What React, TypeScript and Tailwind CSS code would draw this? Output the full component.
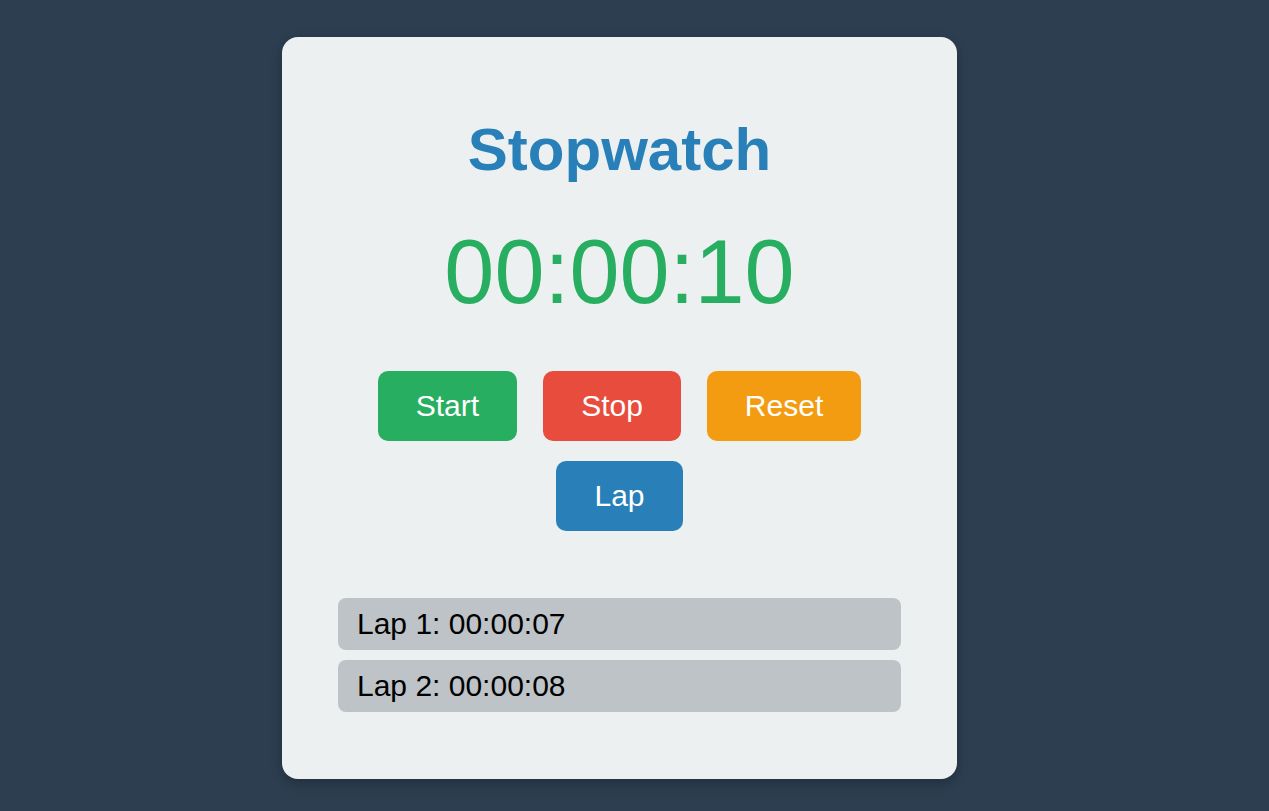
import { useEffect, useRef, useState } from 'react'

const font = { fontFamily: '"Liberation Sans", Arial, sans-serif' }

function fmt(sec: number) {
  const h = Math.floor(sec / 3600)
  const m = Math.floor((sec % 3600) / 60)
  const s = sec % 60
  return [h, m, s].map(n => String(n).padStart(2, '0')).join(':')
}

export default function App() {
  const [seconds, setSeconds] = useState(10)
  const [running, setRunning] = useState(false)
  const [laps, setLaps] = useState<number[]>([7, 8])
  const timer = useRef<number | null>(null)

  useEffect(() => {
    if (!running) return
    timer.current = window.setInterval(() => setSeconds(s => s + 1), 1000)
    return () => {
      if (timer.current) window.clearInterval(timer.current)
    }
  }, [running])

  const btn =
    'h-[70px] px-[38px] rounded-[10px] text-[30px] leading-[70px] text-white cursor-pointer'

  return (
    <div
      className="min-h-screen bg-[#2c3e50] flex justify-center items-start pt-[37px] pr-[30px]"
      style={font}
    >
      <div className="w-[675px] bg-[#ecf0f1] rounded-[16px] shadow-[0_4px_12px_rgba(0,0,0,0.25)] px-[56px] pt-[78px] pb-[67px] flex flex-col items-center">
        <h1 className="text-[60px] leading-[70px] font-bold text-[#2980b9]">Stopwatch</h1>

        <div className="mt-[37px] text-[90px] leading-[100px] text-[#27ae60]">{fmt(seconds)}</div>

        {/* Controls */}
        <div className="mt-[49px] flex flex-wrap justify-center gap-x-[26px] gap-y-[20px] w-full">
          <button className={`${btn} bg-[#27ae60]`} onClick={() => setRunning(true)}>
            Start
          </button>
          <button className={`${btn} bg-[#e74c3c]`} onClick={() => setRunning(false)}>
            Stop
          </button>
          <button
            className={`${btn} bg-[#f39c12]`}
            onClick={() => {
              setRunning(false)
              setSeconds(0)
              setLaps([])
            }}
          >
            Reset
          </button>
          <button className={`${btn} bg-[#2980b9]`} onClick={() => setLaps(l => [...l, seconds])}>
            Lap
          </button>
        </div>

        {/* Laps */}
        <ul className="mt-[67px] w-full flex flex-col gap-[10px]">
          {laps.map((t, i) => (
            <li
              key={i}
              className="h-[52px] leading-[52px] pl-[19px] rounded-[8px] bg-[#bdc3c7] text-[30px] text-black"
            >
              Lap {i + 1}: {fmt(t)}
            </li>
          ))}
        </ul>
      </div>
    </div>
  )
}
